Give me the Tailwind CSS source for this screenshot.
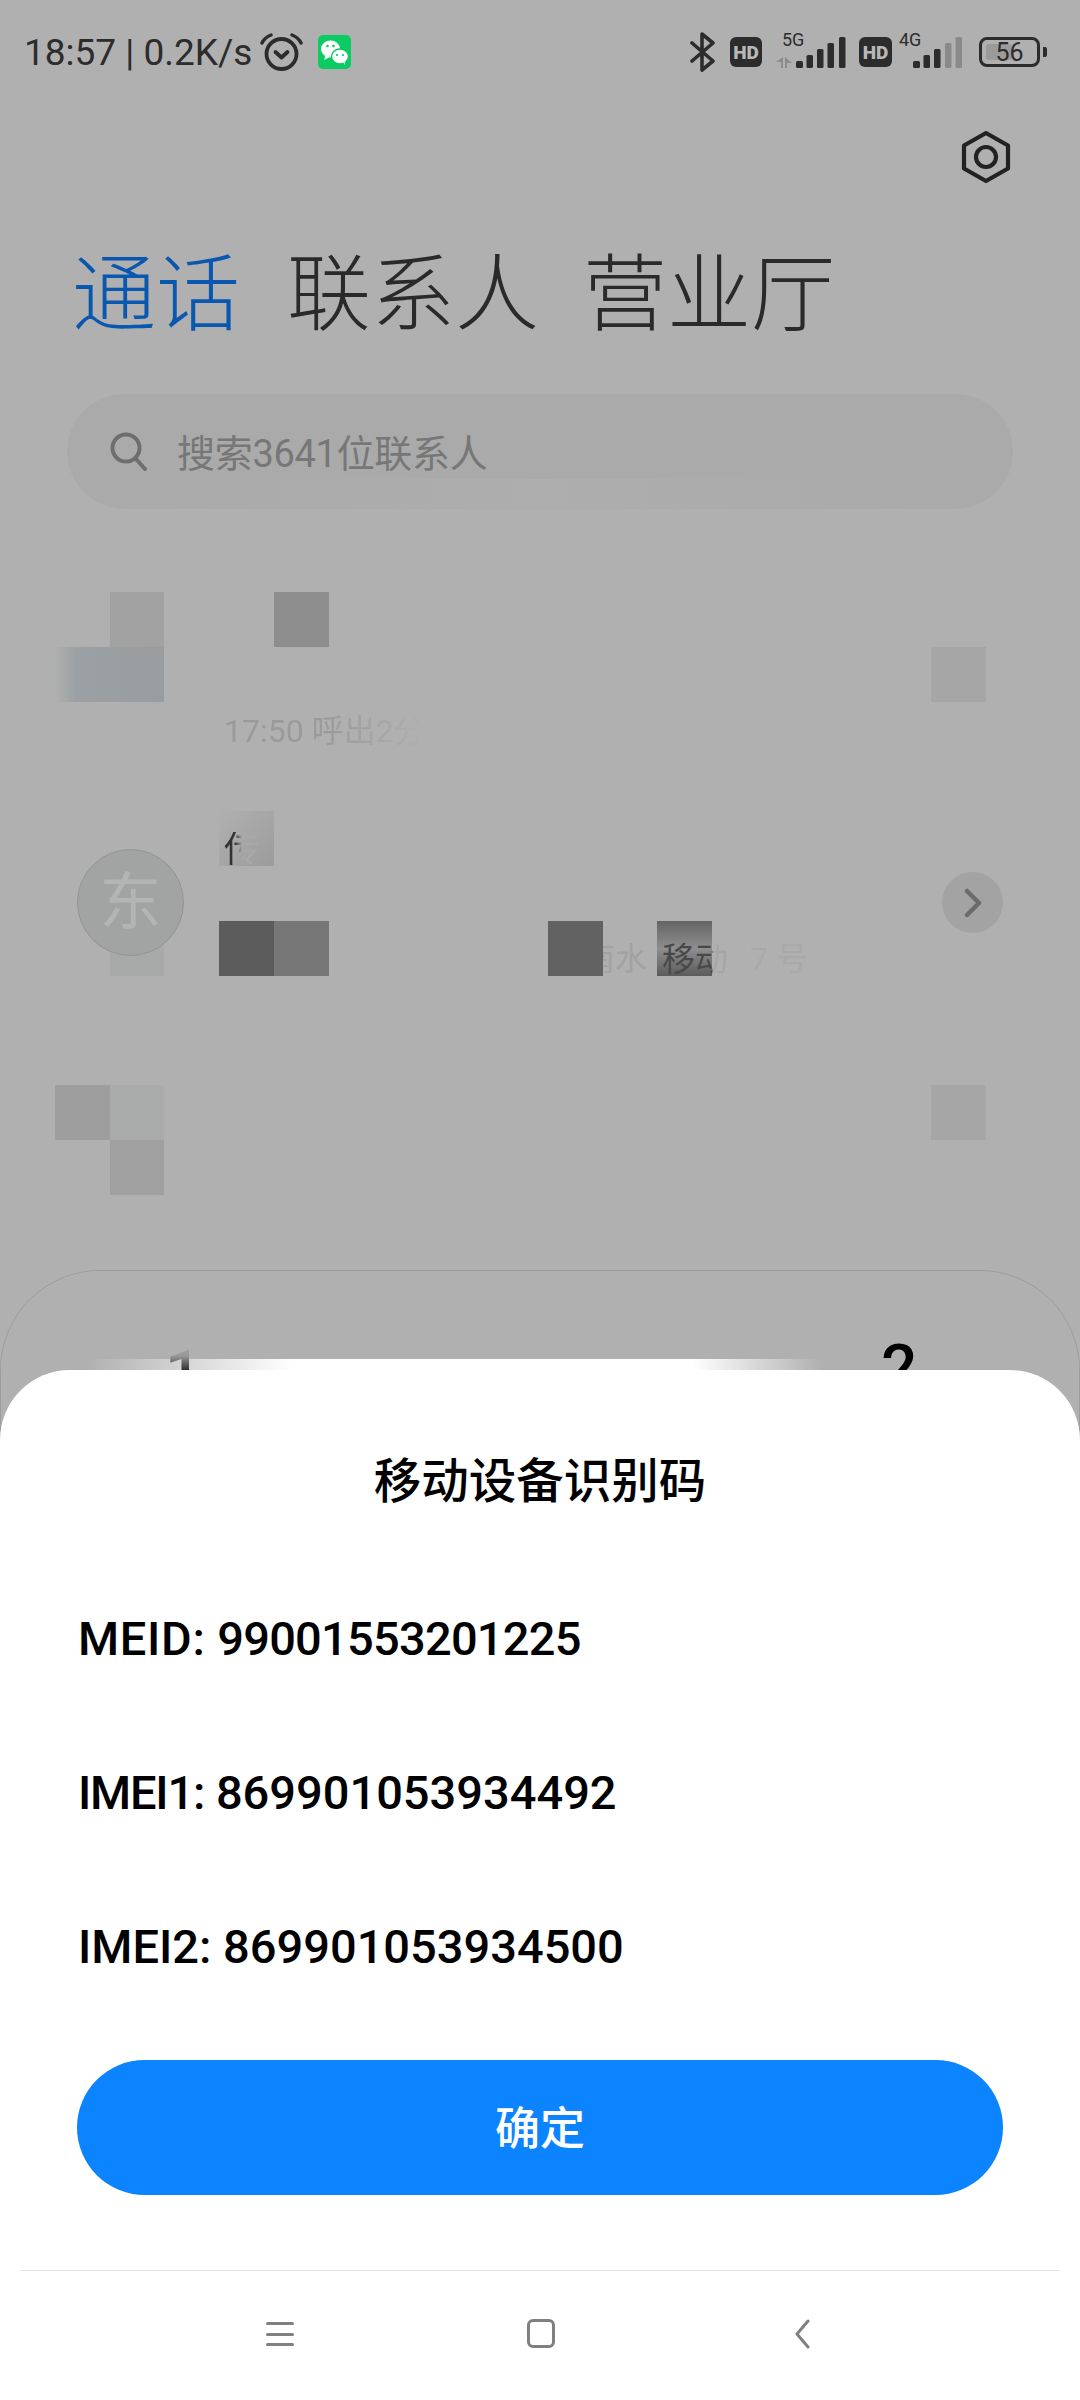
<!DOCTYPE html>
<html lang="zh">
<head>
<meta charset="utf-8">
<script src="https://cdn.jsdelivr.net/npm/@tailwindcss/browser@4"></script>
</head>
<body class="m-0">
<div class="relative w-[1080px] h-[2400px] overflow-hidden bg-[#b0b0b0] font-['Roboto','Noto_Sans_CJK_SC',sans-serif]">

  <!-- status bar -->
  <div class="flex items-center h-[104px] pl-[24px] pr-[33px] text-[#2c2c2c]">
    <span class="w-[236px] text-[37px] leading-none whitespace-nowrap">18:57 | 0.2K/s</span>
    <svg class="w-[43px] h-[39px]" viewBox="0 0 43 39" fill="none" stroke="#2c2c2c" stroke-linecap="round">
      <circle cx="21.500" cy="21" r="15" stroke-width="3.800"/>
      <path d="M15.500 19l6 5.500 6-5.500" stroke-width="3.800" stroke-linejoin="round"/>
      <path d="M2 10c1.500-3.500 4-6 9-8M41 10c-1.500-3.500-4-6-9-8" stroke-width="3.400"/>
    </svg>
    <svg class="ml-[15px] w-[33px] h-[34px]" viewBox="0 0 33 34">
      <rect width="33" height="34" rx="5" fill="#0ccb62"/>
      <ellipse cx="12.500" cy="14" rx="9.500" ry="8.500" fill="#fff"/>
      <path d="M7 20l-.5 5 5-3z" fill="#fff"/>
      <ellipse cx="22" cy="21.500" rx="8.500" ry="7.500" fill="#fff" stroke="#0ccb62" stroke-width="1.500"/>
      <path d="M25 27l2 3-.5-4z" fill="#fff"/>
      <circle cx="9.500" cy="11" r="1.300" fill="#0ccb62"/><circle cx="15.500" cy="11" r="1.300" fill="#0ccb62"/>
      <circle cx="19" cy="20" r="1.100" fill="#0ccb62"/><circle cx="25" cy="20" r="1.100" fill="#0ccb62"/>
    </svg>

    <div class="ml-auto flex items-center">
      <svg class="w-[26px] h-[40px]" viewBox="0 0 26 40" fill="none" stroke="#2c2c2c" stroke-width="3.600" stroke-linecap="round" stroke-linejoin="round">
        <path d="M2 11l21 18-11 9V2l11 9L2 29"/>
      </svg>
      <div class="ml-[14px] w-[32px] h-[30px] rounded-[6px] bg-[#2c2c2c] flex items-center justify-center text-[#b8b8b8] text-[19px] font-black leading-none">HD</div>
      <div class="relative ml-[14px] w-[70px] h-[40px]">
        <span class="absolute left-[6px] top-[0px] text-[18px] leading-[16px] text-[#2c2c2c]">5G</span>
        <svg class="absolute left-0 top-0 w-[70px] h-[40px]" viewBox="0 0 70 40">
          <path d="M7 25v11H5v-6H0zM9 36V25l7 6h-5v5z" fill="#8c8c8c"/>
          <rect x="20" y="29" width="7" height="7" rx="1.500" fill="#2c2c2c"/>
          <rect x="30.500" y="23" width="6.500" height="13" rx="1.500" fill="#2c2c2c"/>
          <rect x="41" y="17" width="6.500" height="19" rx="1.500" fill="#2c2c2c"/>
          <rect x="51.500" y="11" width="6.500" height="25" rx="1.500" fill="#2c2c2c"/>
          <rect x="63" y="5" width="6.500" height="31" rx="1.500" fill="#2c2c2c"/>
        </svg>
      </div>
      <div class="ml-[13px] w-[33px] h-[30px] rounded-[6px] bg-[#2c2c2c] flex items-center justify-center text-[#b8b8b8] text-[19px] font-black leading-none">HD</div>
      <div class="relative ml-[7px] w-[63px] h-[40px]">
        <span class="absolute left-0 top-[0px] text-[18px] leading-[16px] text-[#2c2c2c]">4G</span>
        <svg class="absolute left-[14px] top-0 w-[49px] h-[40px]" viewBox="0 0 49 40">
          <rect x="0" y="29" width="7" height="7" rx="1.500" fill="#2c2c2c"/>
          <rect x="10.500" y="23" width="6.500" height="13" rx="1.500" fill="#2c2c2c"/>
          <rect x="21" y="17" width="6.500" height="19" rx="1.500" fill="#2c2c2c"/>
          <rect x="32" y="11" width="6.500" height="25" rx="1.500" fill="#8a8a8a"/>
          <rect x="42.500" y="5" width="6.500" height="31" rx="1.500" fill="#8a8a8a"/>
        </svg>
      </div>
      <div class="relative ml-[17px] w-[61px] h-[30px] rounded-[8px] border-[3px] border-[#2c2c2c] flex items-center justify-center">
        <div class="absolute left-[4px] top-[4px] bottom-[4px] w-[26px] rounded-[3px] bg-[#9b9b9b]"></div>
        <span class="relative text-[25px] leading-none text-[#2c2c2c]">56</span>
      </div>
      <div class="ml-[3px] w-[4px] h-[10px] rounded-r-[2px] bg-[#2c2c2c]"></div>
    </div>
  </div>

  <!-- settings -->
  <div class="flex justify-end h-[150px] pr-[69px] pt-[26px]">
    <svg class="w-[50px] h-[54px]" viewBox="0 0 50 54" fill="none" stroke="#222" stroke-width="4.200" stroke-linejoin="round">
      <path d="M25 3l22 12.500v23L25 51 3 38.500v-23z"/>
      <circle cx="25" cy="27" r="10"/>
    </svg>
  </div>

  <!-- tabs -->
  <div class="flex items-center h-[84px] pl-[72px] gap-[44px] text-[84px] leading-none font-light text-[#2a2a2a]">
    <span class="text-[#0a57b0]">通话</span>
    <span class="ml-[3px]">联系人</span>
    <span>营业厅</span>
  </div>

  <!-- search -->
  <div class="flex items-center mx-[67px] mt-[56px] h-[115px] w-[946px] rounded-full bg-[#aaaaaa] pl-[43px] relative">
    <svg class="w-[38px] h-[39px]" viewBox="0 0 38 39" fill="none" stroke="#6e6e6e" stroke-width="4" stroke-linecap="round">
      <circle cx="16" cy="16" r="13.500"/>
      <path d="M26 27l9 10"/>
    </svg>
    <span class="ml-[29px] pt-[5px] text-[38px] leading-none text-[#777777] tracking-[-0.3px]">搜索3641位联系人</span>
    <div class="absolute left-[100px] right-[100px] bottom-0 h-[30px] bg-gradient-to-r from-[#aaaaaa] via-[#b0b0b0] to-[#aaaaaa] opacity-60"></div>
  </div>

  <!-- call log rows -->
  <div class="relative h-[183px] mt-[83px]">
    <div class="absolute left-[110px] top-0 w-[54px] h-[55px] bg-[#a2a2a2]"></div>
    <div class="absolute left-[55px] top-[55px] w-[109px] h-[55px] bg-gradient-to-r from-[#b0b0b0] via-[#9aa0a4] to-[#9a9d9f] via-[20%]"></div>
    <div class="absolute left-[274px] top-0 w-[55px] h-[55px] bg-[#8e8e8e]"></div>
    <div class="absolute left-[931px] top-[55px] w-[55px] h-[55px] bg-[#a6a6a6]"></div>
    <span class="absolute left-[224px] top-[123px] text-[32px] leading-none text-transparent bg-clip-text bg-gradient-to-r from-[#9a9a9a] via-[#9a9a9a] to-[#b0b0b0] whitespace-nowrap">17:50 呼出2分</span>
  </div>

  <div class="relative h-[183px] mt-[36px]">
    <div class="absolute left-[219px] top-0 w-[55px] h-[55px] bg-gradient-to-br from-[#b0b0b0] to-[#9c9c9c]"></div>
    <span class="absolute left-[224px] top-[21px] text-[36px] leading-[36px] text-transparent bg-clip-text bg-gradient-to-r from-[#333333] from-[30%] to-[#a8a8a8] to-[50%]">传</span>
    <div class="absolute left-[110px] top-[110px] w-[54px] h-[55px] bg-[#a8aaa9]"></div>
    <div class="absolute left-[77px] top-[38px] w-[107px] h-[107px] rounded-full bg-[#a2a4a3] border border-[#949494] flex items-center justify-center text-[62px] leading-none text-[#b4b4b4]">东</div>
    <div class="absolute left-[219px] top-[110px] w-[55px] h-[55px] bg-[#5c5c5c]"></div>
    <div class="absolute left-[274px] top-[110px] w-[55px] h-[55px] bg-[#777777]"></div>
    <span class="absolute left-[583px] top-[132px] text-[32px] leading-none text-[#a2a2a2] whitespace-nowrap">南水</span>
    <div class="absolute left-[548px] top-[110px] w-[55px] h-[55px] bg-[#626262]"></div>
    <div class="absolute left-[657px] top-[110px] w-[55px] h-[55px] bg-gradient-to-b from-[#646464] via-[#8e8e8e] to-[#5c5c5c]"></div>
    <span class="absolute left-[662px] top-[132px] text-[33px] leading-none text-[#484848] whitespace-nowrap">移</span>
    <span class="absolute left-[695px] top-[132px] text-[33px] leading-none text-transparent bg-clip-text bg-gradient-to-r from-[#484848] from-[50%] to-[#a6a6a6] to-[55%] whitespace-nowrap">动</span>
    <span class="absolute left-[750px] top-[132px] text-[32px] leading-none text-[#a9a9a9] whitespace-nowrap">7 号</span>
    <div class="absolute left-[942px] top-[61px] w-[61px] h-[61px] rounded-full bg-[#a3a3a3] flex items-center justify-center">
      <svg class="w-[18px] h-[30px]" viewBox="0 0 18 30" fill="none" stroke="#6b6b6b" stroke-width="4.500" stroke-linecap="round" stroke-linejoin="round"><path d="M3 3l12 12L3 27"/></svg>
    </div>
  </div>

  <div class="relative h-[110px] mt-[91px]">
    <div class="absolute left-[55px] top-0 w-[55px] h-[55px] bg-[#9d9e9d]"></div>
    <div class="absolute left-[110px] top-0 w-[54px] h-[55px] bg-[#a9abaa]"></div>
    <div class="absolute left-[110px] top-[55px] w-[54px] h-[55px] bg-[#9fa09f]"></div>
    <div class="absolute left-[931px] top-0 w-[55px] h-[55px] bg-[#a6a6a6]"></div>
  </div>

  <!-- dial pad edge under the dialog -->
  <div class="absolute left-0 right-0 top-[1270px] h-[200px] rounded-t-[100px] border border-[#9c9c9c] overflow-hidden">
    <div class="absolute left-0 w-[900px] top-[-1px] h-[8px] bg-[#b0b0b0]"></div>
    <div class="absolute left-0 w-[1080px] top-[88px] h-[11px] bg-[linear-gradient(90deg,#b0b0b0_8%,#ffffff_27%,#ffffff_64%,#b0b0b0_76%)]"></div>
    <span class="absolute left-[164px] top-[72px] text-[64px] leading-none font-medium text-transparent bg-clip-text bg-gradient-to-b from-[#9a9a9a] from-[20%] to-[#222222] to-[46%]">1</span>
    <span class="absolute left-[880px] top-[66px] text-[64px] leading-none font-medium text-black">2</span>
  </div>

  <!-- dialog -->
  <div class="absolute left-0 right-0 bottom-0 h-[1030px] bg-white rounded-t-[70px] flex flex-col text-black">
    <div class="mt-[85px] text-center text-[47.500px] leading-[54px] font-medium">移动设备识别码</div>
    <div class="mt-[103px] pl-[78px] flex flex-col gap-[100px] text-[47px] leading-[54px] font-medium">
      <div><span class="tracking-[0.700px]">MEID:</span> <span class="tracking-[-0.750px]">99001553201225</span></div>
      <div><span class="tracking-[-1.200px]">IMEI1:</span> <span>869901053934492</span></div>
      <div><span>IMEI2:</span> <span>869901053934500</span></div>
    </div>
    <div class="mx-[77px] mt-[86px] h-[135px] rounded-full bg-[#0d84ff] flex items-center justify-center pt-[4px] text-white text-[45px] font-medium">确定</div>
    <div class="mx-[20px] mt-[75px] h-[1px] bg-[#e4e4e4]"></div>
    <div class="relative flex-1">
      <div class="absolute left-[266px] top-[51px] w-[28px] h-[24px] flex flex-col justify-between">
        <div class="h-[3px] bg-[#808080] rounded-full"></div><div class="h-[3px] bg-[#808080] rounded-full"></div><div class="h-[3px] bg-[#808080] rounded-full"></div>
      </div>
      <div class="absolute left-[527px] top-[48px] w-[28px] h-[29px] rounded-[6px] border-[3px] border-[#808080]"></div>
      <svg class="absolute left-[794px] top-[48px] w-[16px] h-[30px]" viewBox="0 0 16 30" fill="none" stroke="#808080" stroke-width="3" stroke-linecap="round" stroke-linejoin="round"><path d="M14 2L3 15l11 13"/></svg>
    </div>
  </div>
</div>
</body>
</html>
